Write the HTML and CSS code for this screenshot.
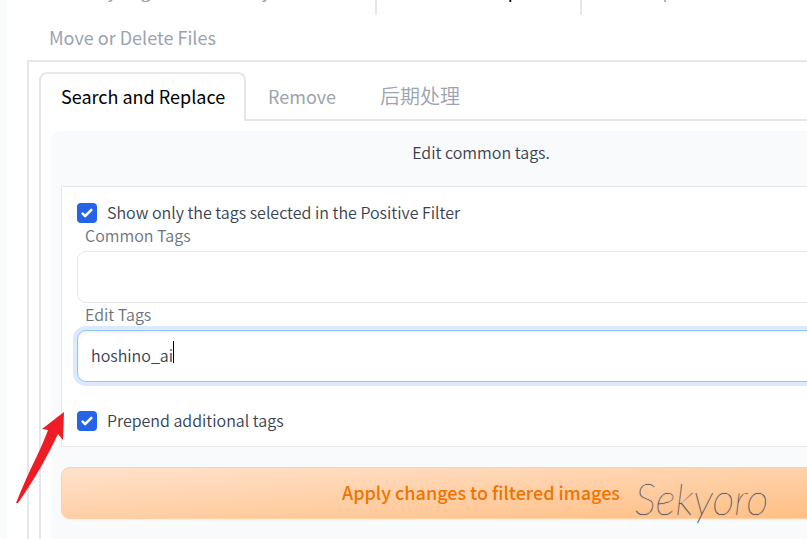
FILE: index.html
```
<!DOCTYPE html>
<html lang="en">
	<head>
		<meta charset="utf-8">
		<title>Dataset Tag Editor</title>
		<link rel="stylesheet" href="styles.css">
	</head>
	<body>
		<main class="page">
			<nav class="tabs">
				<button class="tab" type="button">Filter by Tags</button>
				<button class="tab" type="button">Filter by Selection</button>
				<button class="tab selected" type="button">Batch Edit Captions</button>
				<button class="tab" type="button">Edit Caption of Selected Image</button>
				<button class="tab" type="button">Move or Delete Files</button>
			</nav>
			<section class="panel">
				<nav class="subtabs">
					<button class="subtab selected" type="button">Search and Replace</button>
					<button class="subtab" type="button">Remove</button>
					<button class="subtab zh" type="button" lang="zh">后期处理</button>
				</nav>
				<div class="subpanel">
					<form class="group">
						<p class="hint">Edit common tags.</p>
						<div class="fields">
							<label class="check"><input type="checkbox" checked>Show only the tags selected in the Positive Filter</label>
							<label class="caption" for="commonTags">Common Tags</label>
							<input type="text" id="commonTags" class="textbox">
							<label class="caption" for="editTags">Edit Tags</label>
							<div class="editor">
								<input type="text" id="editTags" class="textbox active" value="hoshino_ai">
								<span class="caret"></span>
							</div>
							<label class="check last"><input type="checkbox" checked>Prepend additional tags</label>
						</div>
						<button class="apply" type="button">Apply changes to filtered images</button>
					</form>
				</div>
			</section>
		</main>
		<svg class="arrow" width="50" height="94" viewBox="0 0 50 94">
			<path d="M48 1 L26 18 L32 19 Q28 30 20 47 Q10 67 0 92 L2 92 Q14 75 26 54 Q35 38 42 23 L47 29 Z" fill="#ee1c24"/>
		</svg>
		<span class="signature">Sekyoro</span>
	</body>
</html>
```
FILE: styles.css
```
*{
	box-sizing:border-box;
}
body{
	margin:0;
	min-height:100vh;
	overflow:hidden;
	background:#f9fafb;
	color:#374151;
	font:350 16px/23px "Noto Sans CJK SC", "Noto Sans", sans-serif;
	position:relative;
}
button, input{
	font:inherit;
	color:inherit;
	margin:0;
}
/* wider than the window, the right side runs off screen */
.page{
	margin:-32px -148px 0 7px;
	padding:0 20px 0 20px;
	background:#fff;
}
.tabs{
	display:flex;
	flex-wrap:wrap;
}
.tab, .subtab{
	height:47px;
	padding:0 22px 4px;
	border:0;
	background:none;
	color:#9ca3af;
	font-size:18px;
	font-weight:400;
	line-height:24px;
}
.tab.selected{
	padding:0 19px 6px;
	border:2px solid #e5e7eb;
	border-bottom:0;
	border-radius:8px 8px 0 0;
	color:#000;
}
.panel{
	margin-top:-2px;
	padding:10px;
	border:2px solid #e5e7eb;
	min-height:520px;
}
.subtabs{
	display:flex;
}
.subtab{
	height:49px;
	padding-bottom:0;
	border-bottom:2px solid #e5e7eb;
}
.subtab:last-child{
	flex:1;
	text-align:left;
}
.subtab.selected{
	padding:0 19px 4px 20px;
	border:2px solid #e5e7eb;
	border-bottom:0;
	border-radius:8px 8px 0 0;
	color:#000;
}
.subtab.zh{
	font-size:20px;
	font-weight:350;
}
.subpanel{
	padding:10px;
	border:2px solid #e5e7eb;
	border-top:0;
}
.group{
	margin:0;
	padding:10px 10px 60px;
	border-radius:10px;
	background:#f9fafc;
}
.hint{
	margin:0 0 22px;
	text-align:center;
}
.fields{
	display:flex;
	flex-direction:column;
	padding:14px 15px;
	border:1px solid #e5e7eb;
	background:#fff;
}
.check{
	display:flex;
	align-items:center;
	gap:10px;
}
.check input{
	appearance:none;
	width:20px;
	height:20px;
	border-radius:4px;
	background:#2563eb;
}
.check input:checked{
	background-image:url("data:image/svg+xml,%3Csvg viewBox='0 0 16 16' fill='white' xmlns='http://www.w3.org/2000/svg'%3E%3Cpath d='M12.207 4.793a1 1 0 010 1.414l-5 5a1 1 0 01-1.414 0l-2-2a1 1 0 011.414-1.414L6.5 9.086l4.293-4.293a1 1 0 011.414 0z'/%3E%3C/svg%3E");
}
.check.last{
	margin-top:27px;
}
.caption{
	padding-left:8px;
	color:#6b7280;
}
.textbox{
	display:block;
	width:100%;
	height:52px;
	margin-top:4px;
	padding:0 13px 2px;
	border:1px solid #e5e7eb;
	border-radius:9px;
	outline:0;
	background:#fff;
}
.textbox.active{
	border-color:#93c5fd;
	box-shadow:0 0 0 4px #dbeafe, inset 0 2px 4px rgba(0,0,0,.05);
}
.editor{
	position:relative;
}
.caret{
	position:absolute;
	left:96px;
	top:15px;
	width:1px;
	height:22px;
	background:#000;
}
.apply{
	display:block;
	width:100%;
	height:52px;
	margin-top:20px;
	padding-bottom:2px;
	border:1px solid #fed0a4;
	border-radius:9px;
	background:linear-gradient(to bottom right, #ffe2cc, #ffbd80);
	color:#ee7402;
	font-size:18px;
	font-weight:500;
	box-shadow:0 1px 2px rgba(0,0,0,.05);
}
/* drawn over the form */
.arrow{
	position:absolute;
	left:16px;
	top:411px;
}
.signature{
	position:absolute;
	left:635px;
	top:479px;
	color:#374151;
	font:italic 200 43px/40px Lato, sans-serif;
	text-shadow:0 0 1px #374151, 1px 0 0 #ffffff80;
}
```
